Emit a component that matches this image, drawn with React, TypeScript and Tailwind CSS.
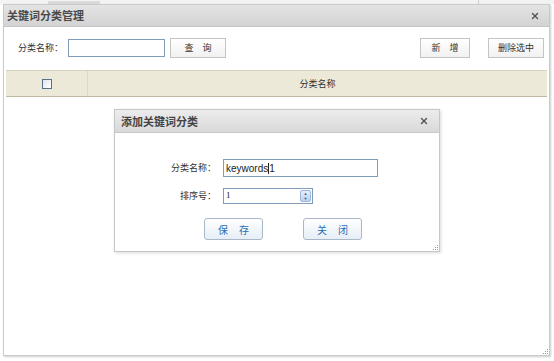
import { X } from "lucide-react";

const font = { fontFamily: '"Noto Sans CJK SC", "Liberation Sans", sans-serif' };

function Btn({ label, className = "" }: { label: string; className?: string }) {
  return (
    <div
      className={`flex items-center justify-center border border-[#c4c4c4] bg-gradient-to-b from-white to-[#f1f1f1] text-[9px] text-[#333] ${className}`}
    >
      {label}
    </div>
  );
}

function BlueBtn({ label }: { label: string }) {
  return (
    <div className="flex h-[22px] w-[59px] items-center justify-center rounded-[3px] border border-[#a9b8c8] bg-gradient-to-b from-white to-[#e6eef6] pl-[11px] text-[10px] tracking-[11px] text-[#2a6db3]">
      {label}
    </div>
  );
}

function Grip() {
  return (
    <div className="absolute bottom-[1px] right-[1px] flex flex-col items-end gap-[1px]">
      <div className="h-[1px] w-[1px] bg-[#999]" />
      <div className="flex gap-[1px]">
        <div className="h-[1px] w-[1px] bg-[#999]" />
        <div className="h-[1px] w-[1px] bg-[#999]" />
      </div>
      <div className="flex gap-[1px]">
        <div className="h-[1px] w-[1px] bg-[#999]" />
        <div className="h-[1px] w-[1px] bg-[#999]" />
        <div className="h-[1px] w-[1px] bg-[#999]" />
      </div>
    </div>
  );
}

function AddDialog() {
  return (
    <div className="absolute left-[114px] top-[109px] flex h-[143px] w-[326px] flex-col border border-[#c6c6c6] bg-white shadow-[1px_1px_3px_rgba(0,0,0,0.15)]">
      <div className="flex h-[23px] items-center justify-between border-b border-[#c8c8c8] bg-gradient-to-b from-[#ececec] to-[#d9d9d9] pl-[6px] pr-[10px]">
        <span className="text-[11px] font-bold text-[#444]">添加关键词分类</span>
        <X size={10} strokeWidth={3.2} className="text-[#555]" />
      </div>
      <div className="flex flex-col pt-[26px]">
        <div className="flex items-center">
          <span className="w-[101px] text-right text-[9px] text-[#333]">分类名称：</span>
          <div
            className="ml-[7px] flex h-[18px] w-[155px] items-center border border-[#7f9db9] pl-[2px] text-[10px] text-[#222]"
            style={{ fontFamily: '"Liberation Sans", sans-serif' }}
          >
            keywords<span className="h-[11px] w-px bg-[#222]" />1
          </div>
        </div>
        <div className="mt-[11px] flex items-center">
          <span className="w-[101px] text-right text-[9px] text-[#333]">排序号：</span>
          <div
            className="ml-[7px] flex h-[16px] w-[90px] items-center justify-between border border-[#7f9db9] pl-[2px] text-[9px] text-[#222]"
            style={{ fontFamily: '"Liberation Serif", serif' }}
          >
            1
            <div className="mr-[1px] flex h-[12px] w-[11px] flex-col items-center justify-center rounded-[2px] border border-[#9fb6dc] bg-gradient-to-b from-[#e6eefa] to-[#bcd0f0] text-[4px] leading-[5px] text-[#3b5a8a]">
              <span>▲</span>
              <span>▼</span>
            </div>
          </div>
        </div>
        <div className="mt-[14px] flex gap-[40px] pl-[89px]">
          <BlueBtn label="保存" />
          <BlueBtn label="关闭" />
        </div>
      </div>
      <Grip />
    </div>
  );
}

export default function App() {
  return (
    <div className="relative h-[361px] w-[554px] overflow-hidden bg-white" style={font}>
      <div className="flex h-[4px] items-end bg-[#f3f3f3]">
        <div className="ml-[48px] h-[3px] w-[52px] bg-[#dadada]" />
        <div className="ml-[378px] h-[4px] w-px bg-[#cfcfcf]" />
      </div>
      <div className="relative ml-[3px] flex h-[352px] w-[547px] flex-col border border-[#c9c9c9] bg-white shadow-[1px_1px_2px_rgba(0,0,0,0.2)]">
        <div className="flex h-[22px] items-center justify-between border-b border-[#c4c4c4] bg-gradient-to-b from-[#e4e4e4] to-[#d3d3d3] pl-[3px] pr-[9px]">
          <span className="text-[11px] font-bold text-[#4a4a4a]">关键词分类管理</span>
          <X size={10} strokeWidth={3.2} className="text-[#555]" />
        </div>
        <div className="mt-[11px] flex items-center pl-[14px] pr-[5px]">
          <span className="text-[9px] text-[#333]">分类名称：</span>
          <div className="ml-[5px] h-[18px] w-[97px] border border-[#7f9db9]" />
          <Btn label="查　询" className="ml-[5px] h-[20px] w-[56px]" />
          <Btn label="新　增" className="ml-auto h-[20px] w-[50px]" />
          <Btn label="删除选中" className="ml-[18px] h-[20px] w-[56px]" />
        </div>
        <div className="mx-[2px] mt-[12px] flex h-[27px] border-y border-[#d6d2c2] border-b-[#bfb9a3] bg-[#ece9d8]">
          <div className="flex w-[82px] items-center justify-center border-r border-[#dcd8c8]">
            <div className="h-[10px] w-[10px] border border-[#5a6f8a] bg-gradient-to-br from-[#dfe6ee] to-white" />
          </div>
          <div className="flex flex-1 items-center justify-center text-[9px] text-[#333]">分类名称</div>
        </div>
        <Grip />
      </div>
      <AddDialog />
    </div>
  );
}
